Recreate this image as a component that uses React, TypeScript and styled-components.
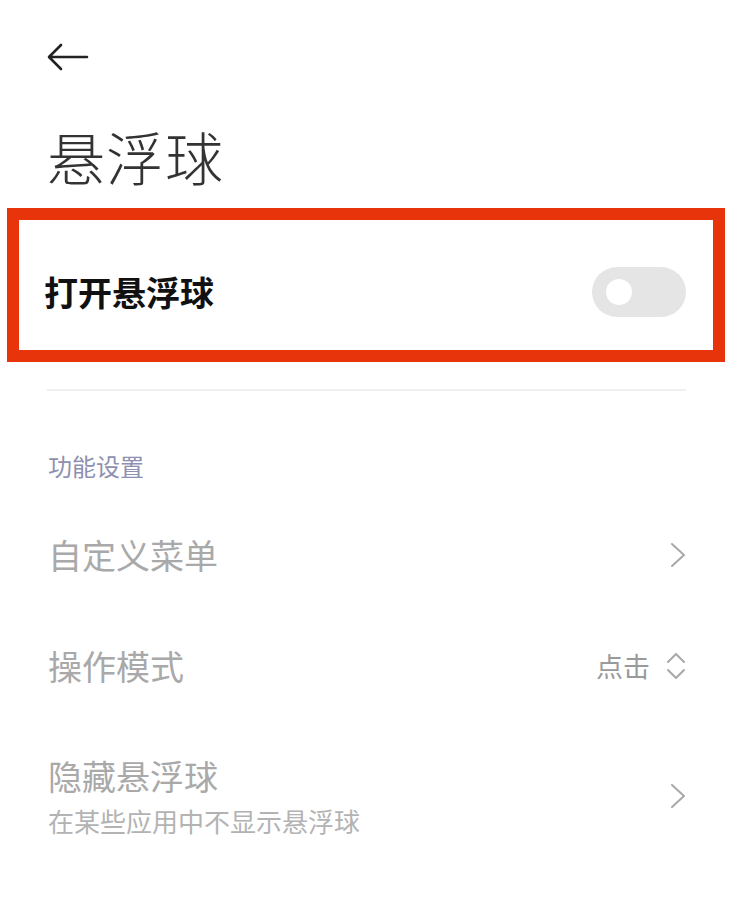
import React from "react";
import styled, { createGlobalStyle } from "styled-components";

const GlobalStyle = createGlobalStyle`
    html, body {
        margin: 0;
        padding: 0;
        background: #ffffff;
    }
    body {
        font-family: "Noto Sans CJK SC", "Noto Sans", sans-serif;
        -webkit-font-smoothing: antialiased;
    }
`;

const Page = styled.div`
    width: 756px;
    min-height: 900px;
    background: #fff;
    display: flex;
    flex-direction: column;
`;

const TopBar = styled.div`
    padding: 44px 0 0 47px;
    height: 26px;
    display: flex;
    align-items: center;
`;

const Title = styled.h1`
    margin: 57px 0 0 47px;
    font-size: 58px;
    line-height: 58px;
    font-weight: 300;
    color: #333;
    letter-spacing: 1px;
`;

// красная рамка вокруг главного переключателя
const Highlight = styled.div`
    box-sizing: border-box;
    margin: 23px 0 0 7px;
    width: 718px;
    height: 154px;
    border: 12px solid #e8340a;
    padding: 14px 27px 0 25px;
    display: flex;
    align-items: center;
    justify-content: space-between;
`;

const MainLabel = styled.span`
    font-size: 34px;
    line-height: 40px;
    font-weight: 700;
    color: #111;
`;

const Switch = styled.div<{ on: boolean }>`
    position: relative;
    width: 94px;
    height: 50px;
    border-radius: 25px;
    background: ${({ on }) => (on ? "#0d84ff" : "#e5e5e5")};
`;

const Knob = styled.div<{ on: boolean }>`
    position: absolute;
    top: 12px;
    left: ${({ on }) => (on ? "55px" : "14px")};
    width: 26px;
    height: 26px;
    border-radius: 50%;
    background: #fff;
`;

const Divider = styled.div`
    margin: 27px 70px 0 47px;
    height: 2px;
    background: #efefef;
`;

const SectionTitle = styled.div`
    margin: 63px 0 0 48px;
    font-size: 24px;
    line-height: 24px;
    color: #8d90b0;
`;

const List = styled.div`
    margin-top: 21px;
    display: flex;
    flex-direction: column;
`;

const Row = styled.div<{ height: number }>`
    height: ${({ height }) => height}px;
    padding: 0 70px 0 48px;
    display: flex;
    align-items: center;
    justify-content: space-between;
`;

const RowText = styled.div`
    display: flex;
    flex-direction: column;
    gap: 10px;
`;

const RowLabel = styled.span`
    font-size: 34px;
    line-height: 40px;
    color: #a9a9a9;
`;

const RowHint = styled.span`
    font-size: 26px;
    line-height: 30px;
    color: #b3b3b3;
`;

const RowRight = styled.div`
    display: flex;
    align-items: center;
    gap: 16px;
`;

const ValueText = styled.span`
    font-size: 27px;
    line-height: 30px;
    color: #9a9a9a;
`;

const BackArrow = () => (
    <svg width="42" height="28" viewBox="0 0 42 28" fill="none">
        <path d="M40 14H3M14 2L2 14l12 12" stroke="#222" strokeWidth="2.6" strokeLinecap="round" strokeLinejoin="round" />
    </svg>
);

const Chevron = () => (
    <svg width="16" height="26" viewBox="0 0 16 26" fill="none">
        <path d="M2 2l12 11L2 24" stroke="#a8a8a8" strokeWidth="2" strokeLinecap="round" strokeLinejoin="round" />
    </svg>
);

const UpDown = () => (
    <svg width="20" height="28" viewBox="0 0 20 28" fill="none">
        <path d="M2 10l8-8 8 8M2 18l8 8 8-8" stroke="#a8a8a8" strokeWidth="2" strokeLinecap="round" strokeLinejoin="round" />
    </svg>
);

const App: React.FC = () => {
    const enabled = false;

    return (
        <Page>
            <GlobalStyle />
            <TopBar>
                <BackArrow />
            </TopBar>
            <Title>悬浮球</Title>
            <Highlight>
                <MainLabel>打开悬浮球</MainLabel>
                <Switch on={enabled}>
                    <Knob on={enabled} />
                </Switch>
            </Highlight>
            <Divider />
            <SectionTitle>功能设置</SectionTitle>
            <List>
                <Row height={112}>
                    <RowLabel>自定义菜单</RowLabel>
                    <Chevron />
                </Row>
                <Row height={110}>
                    <RowLabel>操作模式</RowLabel>
                    <RowRight>
                        <ValueText>点击</ValueText>
                        <UpDown />
                    </RowRight>
                </Row>
                <Row height={150}>
                    <RowText>
                        <RowLabel>隐藏悬浮球</RowLabel>
                        <RowHint>在某些应用中不显示悬浮球</RowHint>
                    </RowText>
                    <Chevron />
                </Row>
            </List>
        </Page>
    );
};

export default App;
